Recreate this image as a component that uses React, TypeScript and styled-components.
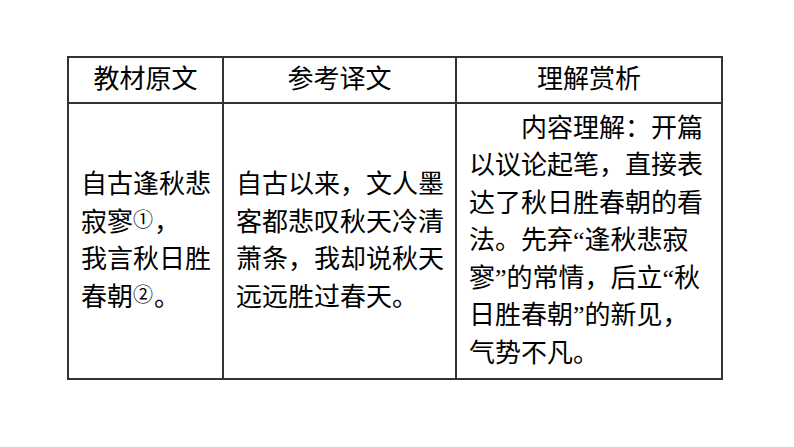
import React from 'react';
import styled, { createGlobalStyle } from 'styled-components';

const GlobalStyle = createGlobalStyle`
  html, body {
    margin: 0;
    padding: 0;
    background: #ffffff;
  }
  body {
    font-family: "Liberation Serif", "Noto Sans CJK SC", serif;
    color: #000;
  }
`;

const Page = styled.div`
  width: 794px;
  height: 447px;
  padding: 56px 0 0 67px;
  box-sizing: border-box;
`;

const Grid = styled.div`
  display: grid;
  grid-template-columns: 155px 233px 266px;
  grid-template-rows: 46px 276px;
  width: max-content;
  border-top: 2px solid #333;
  border-left: 2px solid #333;
`;

const Cell = styled.div`
  box-sizing: border-box;
  border-right: 2px solid #333;
  border-bottom: 2px solid #333;
  font-size: 26px;
  line-height: 37.5px;
`;

const HeaderCell = styled(Cell)`
  display: flex;
  align-items: center;
  justify-content: center;
`;

const BodyCell = styled(Cell)<{ justify?: boolean; indent?: boolean }>`
  display: flex;
  align-items: center;
  padding: 0 11px 0 12px;

  p {
    margin: 0;
    width: 100%;
    text-align: ${p => (p.justify ? 'justify' : 'left')};
    text-indent: ${p => (p.indent ? '2em' : '0')};
  }
`;

// circled footnote marks sit small and slightly raised
const Note = styled.span`
  display: inline-block;
  font-family: "Noto Sans CJK SC", sans-serif;
  font-size: 20px;
  line-height: 20px;
  vertical-align: 4px;
  margin-right: 1px;
`;

const App: React.FC = () => {
  return (
    <Page>
      <GlobalStyle />
      <Grid>
        <HeaderCell>教材原文</HeaderCell>
        <HeaderCell>参考译文</HeaderCell>
        <HeaderCell>理解赏析</HeaderCell>

        <BodyCell justify>
          <p>
            自古逢秋悲寂寥<Note>①</Note>，<br />
            我言秋日胜春朝<Note>②</Note>。
          </p>
        </BodyCell>
        <BodyCell>
          <p>自古以来，文人墨客都悲叹秋天冷清萧条，我却说秋天远远胜过春天。</p>
        </BodyCell>
        <BodyCell indent>
          <p>
            内容理解：开篇以议论起笔，直接表达了秋日胜春朝的看法。先弃“逢秋悲寂寥”的常情，后立“秋日胜春朝”的新见，气势不凡。
          </p>
        </BodyCell>
      </Grid>
    </Page>
  );
};

export default App;
